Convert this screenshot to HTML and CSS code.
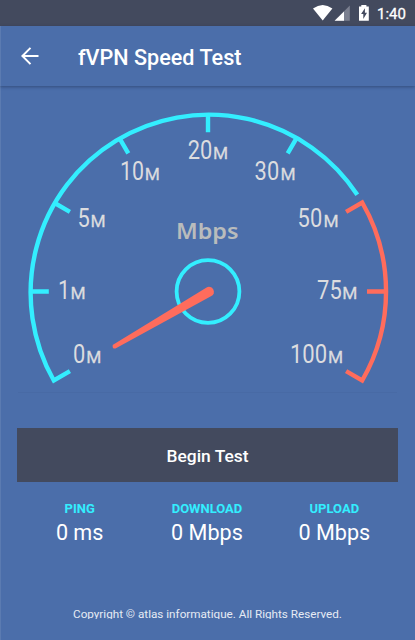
FILE: index.html
```html
<!DOCTYPE html>
<html lang="en">
<head>
<meta charset="utf-8">
<title>fVPN Speed Test</title>
<link rel="stylesheet" href="styles.css">
</head>
<body>
<div class="statusbar">
  <svg class="status-icons" width="84" height="26" viewBox="0 0 84 26">
    <path class="white" d="M0 8.6Q9.7 1.6 19.4 8.6L9.7 20.6Z"/>
    <path class="faint" d="M36.8 5.6V20.8H21.6Z"/>
    <path class="white" d="M31 11.5V20.8H21.6Z"/>
    <path class="white" d="M48.3 5H53.4V6.5H55.8V20.8H46V6.5H48.3Z"/>
    <path class="bolt" d="M51.9 8.2L48.1 14H50.3V19L54 12.7H51.9Z"/>
  </svg>
  <span class="clock">1:40</span>
</div>
<header class="toolbar">
  <svg class="back" width="18" height="18" viewBox="0 0 18 18"><path d="M9.5 .9L1.4 9L9.5 17.1M1.4 9H17.5"/></svg>
  <h1>fVPN Speed Test</h1>
</header>
<main>
  <svg class="gauge" width="381" height="306" viewBox="17 87 381 306">
    <g class="cyan">
      <path d="M69.9 371.2L53.8 380.5A178 178 0 0 1 357.3 194.8"/>
      <path d="M30 291.5H48.8M53.8 202.5L69.9 211.8M119 137.3L128.3 153.4M208 113.5V132.3M297 137.3L287.7 153.4"/>
      <circle class="hub" cx="208" cy="291.5" r="31.4"/>
    </g>
    <path class="red" d="M346.1 211.8L362.2 202.5A178 178 0 0 1 362.2 380.5L346.1 371.2M386 291.5H367"/>
    <path class="needle" d="M113.4 344.6L206.6 287.5A4.9 4.9 0 0 1 211.4 296.1L115.5 348.4A2.2 2.2 0 0 1 113.4 344.6Z"/>
    <g class="digits">
      <text x="187.7" y="159" textLength="24.6" lengthAdjust="spacingAndGlyphs">20</text>
      <text x="119.9" y="180" textLength="24" lengthAdjust="spacingAndGlyphs">10</text>
      <text x="254.6" y="180" textLength="24.6" lengthAdjust="spacingAndGlyphs">30</text>
      <text x="77.4" y="227" textLength="12.3" lengthAdjust="spacingAndGlyphs">5</text>
      <text x="297.6" y="227" textLength="24.6" lengthAdjust="spacingAndGlyphs">50</text>
      <text x="57.9" y="299.3" textLength="12" lengthAdjust="spacingAndGlyphs">1</text>
      <text x="317.1" y="299.3" textLength="24.6" lengthAdjust="spacingAndGlyphs">75</text>
      <text x="73" y="362.6" textLength="12.3" lengthAdjust="spacingAndGlyphs">0</text>
      <text x="289.9" y="362.6" textLength="37.2" lengthAdjust="spacingAndGlyphs">100</text>
    </g>
    <g class="units">
      <text x="213" y="159">M</text>
      <text x="144.8" y="180">M</text>
      <text x="280.4" y="180">M</text>
      <text x="90.5" y="227">M</text>
      <text x="323.4" y="227">M</text>
      <text x="70.4" y="299.3">M</text>
      <text x="342.2" y="299.3">M</text>
      <text x="86.3" y="362.6">M</text>
      <text x="327.9" y="362.6">M</text>
    </g>
    <text class="mbps" x="176" y="239" textLength="62.5" lengthAdjust="spacingAndGlyphs">Mbps</text>
    <path class="edge" d="M18 392.5H397"/>
  </svg>
  <button class="begin">Begin Test</button>
  <section class="stats">
    <div class="stat"><h2>PING</h2><p>0 ms</p></div>
    <div class="stat"><h2>DOWNLOAD</h2><p>0 Mbps</p></div>
    <div class="stat"><h2>UPLOAD</h2><p>0 Mbps</p></div>
  </section>
</main>
<footer>Copyright © atlas informatique. All Rights Reserved.</footer>
</body>
</html>
```
FILE: styles.css
```css
* { box-sizing: border-box; margin: 0; padding: 0; }
body {
  width: 415px;
  height: 640px;
  overflow: hidden;
  display: flex;
  flex-direction: column;
  background: #4b6eaa;
  color: #fff;
  font-family: Roboto, "Liberation Sans", sans-serif;
  box-shadow: inset 1px 0 #5b7bb1;
}
.statusbar {
  height: 26px;
  flex: none;
  display: flex;
  padding-left: 313px;
  background: #434a5e;
}
.status-icons { flex: none; margin-right: -20px; }
.white { fill: #fff; }
.faint { fill: #7b8090; }
.bolt { fill: #434a5e; }
.clock { font-size: 15px; line-height: 28px; color: #fff; -webkit-text-stroke: .3px #fff; }
.toolbar {
  height: 60px;
  flex: none;
  display: flex;
  align-items: center;
  padding: 3px 0 0 21px;
  box-shadow: 0 1px 3px rgba(30, 45, 80, .5), inset 1px 0 #5b7bb1;
}
.back { fill: none; stroke: #fff; stroke-width: 2; margin-right: 39px; margin-top: -3px; }
.toolbar h1 { font-size: 21.6px; line-height: 31px; font-weight: 500; white-space: nowrap; }
main { padding: 1px 17px 0; flex: 1; }
.gauge { display: block; }
.cyan { fill: none; stroke: #33eeff; stroke-width: 4.4; }
.cyan .hub { stroke-width: 3.8; }
.red { fill: none; stroke: #ff6c5c; stroke-width: 4.4; }
.needle { fill: #ff6c5c; }
.digits { fill: #dcdcdf; font-size: 25px; }
.units { fill: #dcdcdf; stroke: #dcdcdf; stroke-width: .3; font-size: 17.3px; }
.mbps { fill: #b9bcbc; font: 600 22px "Noto Sans", "Open Sans", sans-serif; }
.edge { stroke: #486aa5; stroke-width: 1; }
.begin {
  display: block;
  width: 381px;
  height: 54px;
  margin-top: 35px;
  border: 0;
  background: #434a5e;
  color: #fff;
  font: 500 17.4px/20px Roboto, sans-serif;
  padding-top: 1px;
}
.stats { display: grid; grid-template-columns: repeat(3, 1fr); padding-top: 18px; margin-left: -1px; text-align: center; }
.stat h2 { font-size: 13px; line-height: 17px; font-weight: 700; color: #33eeff; }
.stat p { font-size: 21.6px; line-height: 32px; white-space: nowrap; }
footer {
  height: 13px;
  flex: none;
  margin-bottom: 21px;
  overflow: hidden;
  font-size: 11.7px;
  line-height: 17px;
  text-align: center;
  color: #e6ebf4;
}
```
